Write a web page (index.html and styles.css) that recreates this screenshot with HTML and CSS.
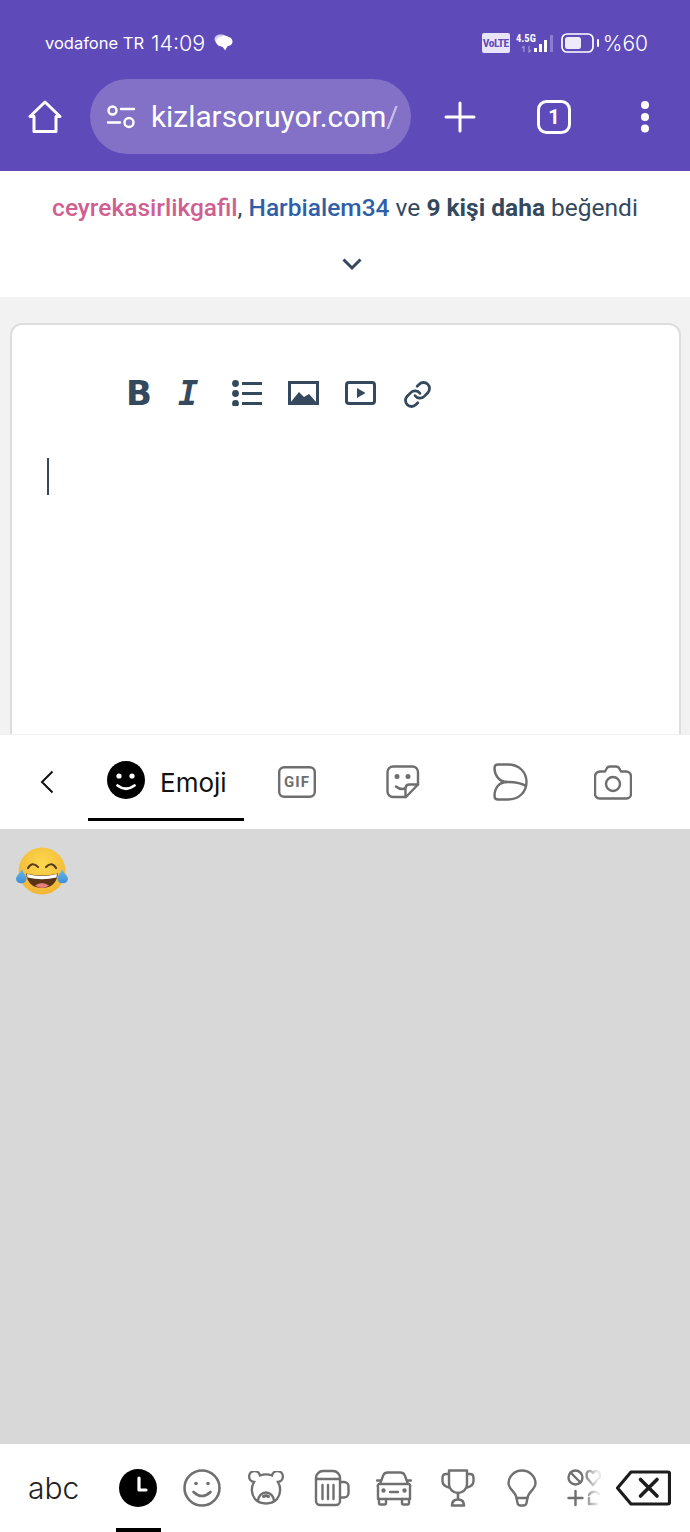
FILE: index.html
```html
<!DOCTYPE html>
<html lang="en">
<head>
  <meta charset="UTF-8" />
  <meta name="viewport" content="width=device-width, initial-scale=1.0"/>
  <title>kizlarsoruyor.com</title>
  <link rel="stylesheet" href="styles.css">
</head>
<body>
  <div class="phone">
    <header class="chrome">
      <div class="status">
        <span class="carrier">vodafone TR</span>
        <span class="clock">14:09</span>
        <svg class="bubble" width="19" height="18" viewBox="0 0 19 18">
          <path d="M7 0.500C11 0.500 14 2.500 14 5C14 8 11 10 7 10C3 10 0.500 8 0.500 5C0.500 2.500 3 0.500 7 0.500Z" fill="#d5cdf0"/>
          <path d="M10.500 2C15 2 18.500 4.300 18.500 7.500C18.500 10.300 16 12 13.500 12.300L11 16.500C10 14.500 9 13 7.500 12.500C4 12 2 10.200 2 7.500C2 4.300 6 2 10.500 2Z" fill="#fff"/>
        </svg>
        <div class="status-right">
          <span class="volte">VoLTE</span>
          <svg class="signal" width="38" height="26" viewBox="0 0 38 26">
            <text x="0" y="12" class="signal-type">4.5G</text>
            <path d="M8 16V22M6 18L8 16M13 16V22L15 20" stroke="#9d8fd8" stroke-width="1.3" fill="none"/>
            <rect x="18" y="18" width="3" height="4" fill="#fff"/>
            <rect x="23" y="14" width="3" height="8" fill="#fff"/>
            <rect x="28" y="10" width="3" height="12" fill="#fff"/>
            <rect x="34" y="5" width="3" height="17" fill="#8d7dd0"/>
          </svg>
          <svg class="battery" width="40" height="20" viewBox="0 0 40 20">
            <rect x="1" y="1" width="31" height="18" rx="5" fill="none" stroke="#fff" stroke-width="1.7"/>
            <rect x="4" y="4" width="16" height="12" rx="2.5" fill="#efeafa"/>
            <rect x="36" y="6" width="2" height="8" rx="1" fill="#fff"/>
          </svg>
          <span class="percent">%60</span>
        </div>
      </div>
      <div class="toolbar">
        <svg class="home" width="34" height="34" viewBox="0 0 34 34"><path d="M17 2L2 16.5H6V31.5H28V16.5H32Z" fill="none" stroke="#fff" stroke-width="3" stroke-linejoin="round"/></svg>
        <div class="url-pill">
          <svg class="tune" width="30" height="24" viewBox="0 0 30 24" fill="none" stroke="#fff" stroke-width="2.4" stroke-linecap="round">
            <circle cx="6.5" cy="5.5" r="4"/>
            <path d="M15 4H28M2 17.5H14"/>
            <circle cx="23" cy="17.5" r="4.5"/>
          </svg>
          <span class="url">kizlarsoruyor.com<span class="url-fade">/</span></span>
        </div>
        <svg class="plus" width="32" height="32" viewBox="0 0 32 32"><path d="M16 2V30M2 16H30" stroke="#fff" stroke-width="3" stroke-linecap="round"/></svg>
        <svg class="tabs" width="36" height="36" viewBox="0 0 36 36">
          <rect x="2.5" y="2.5" width="31" height="31" rx="8" fill="none" stroke="#fff" stroke-width="3"/>
          <text x="18" y="25" class="tabs-count">1</text>
        </svg>
        <svg class="dots" width="10" height="34" viewBox="0 0 10 34" fill="#fff"><circle cx="5" cy="5" r="4"/><circle cx="5" cy="17" r="4"/><circle cx="5" cy="28.5" r="4"/></svg>
      </div>
    </header>

    <section class="likes">
      <p class="likes-text"><span class="user-pink">ceyrekasirlikgafil</span>, <span class="user-blue">Harbialem34</span> ve <b>9 kişi daha</b> beğendi</p>
      <svg class="chevron" width="22" height="14" viewBox="0 0 22 14"><path d="M2.5 2.5L11 11L19.5 2.5" fill="none" stroke="#34495e" stroke-width="3"/></svg>
    </section>

    <section class="reply">
      <div class="editor">
        <div class="format-bar">
          <span class="fmt fmt-bold">B</span>
          <span class="fmt fmt-italic">I</span>
          <svg class="fmt-list" width="32" height="26" viewBox="0 0 32 26" fill="#34495e">
            <circle cx="4.5" cy="3.5" r="3.4"/><circle cx="4.5" cy="13.5" r="3.4"/><circle cx="4.5" cy="23.5" r="3.4"/>
            <path d="M11 3.5H31M11 13.5H31M11 23.5H31" stroke="#34495e" stroke-width="3"/>
          </svg>
          <svg class="fmt-image" width="31" height="24" viewBox="0 0 31 24">
            <rect x="1.5" y="1.5" width="28" height="21" fill="none" stroke="#34495e" stroke-width="3"/>
            <path d="M2 22L11 11L16 16L21 13L29 22Z" fill="#34495e"/>
          </svg>
          <svg class="fmt-video" width="31" height="24" viewBox="0 0 31 24">
            <rect x="1.5" y="1.5" width="28" height="21" rx="2.5" fill="none" stroke="#34495e" stroke-width="3"/>
            <path d="M12 7L20.5 12L12 17Z" fill="#34495e"/>
          </svg>
          <svg class="fmt-link" width="29" height="29" viewBox="0 0 24 24" fill="none" stroke="#34495e" stroke-width="2.3" stroke-linecap="round">
            <path d="M10 13a5 5 0 0 0 7.54.54l3-3a5 5 0 0 0-7.07-7.07l-1.72 1.71"/>
            <path d="M14 11a5 5 0 0 0-7.54-.54l-3 3a5 5 0 0 0 7.07 7.07l1.71-1.71"/>
          </svg>
        </div>
        <div class="caret"></div>
      </div>
    </section>

    <nav class="kb-tabs">
      <div class="kb-back">
        <svg width="14" height="24" viewBox="0 0 14 24"><path d="M12.5 1.5L2 12L12.5 22.5" fill="none" stroke="#111" stroke-width="2"/></svg>
      </div>
      <div class="kb-tab-active">
        <svg width="38" height="38" viewBox="0 0 38 38">
          <circle cx="19" cy="19" r="19" fill="#000"/>
          <circle cx="12" cy="15" r="2.6" fill="#fff"/><circle cx="25" cy="15" r="2.6" fill="#fff"/>
          <path d="M10.5 24.5Q19 31 27.500 24.500" fill="none" stroke="#fff" stroke-width="2.8" stroke-linecap="round"/>
        </svg>
        <span class="kb-tab-label">Emoji</span>
      </div>
      <div class="kb-slot kb-slot-gif">
        <svg width="38" height="32" viewBox="0 0 38 32">
          <rect x="1.2" y="1.2" width="35.600" height="29.600" rx="5" fill="none" stroke="#6e6e6e" stroke-width="2.4"/>
          <text x="19" y="21" class="gif-label">GIF</text>
        </svg>
      </div>
      <div class="kb-slot kb-slot-sticker">
        <svg width="34" height="34" viewBox="0 0 34 34" fill="none" stroke="#6e6e6e" stroke-width="2.400" stroke-linejoin="round" stroke-linecap="round">
          <path d="M7 1.500H26.500A5.500 5.500 0 0 1 32 7V19.500L20 32H7A5.500 5.500 0 0 1 1.500 26.500V7A5.500 5.500 0 0 1 7 1.500Z"/>
          <path d="M32 19.500H23A4 4 0 0 0 19.500 23.500V32"/>
          <path d="M10 21.500Q14 25 19 23.500"/>
          <circle cx="11" cy="11.500" r="1.300" fill="#6e6e6e"/><circle cx="22" cy="11.500" r="1.300" fill="#6e6e6e"/>
        </svg>
      </div>
      <div class="kb-slot kb-slot-bird">
        <svg width="35" height="38" viewBox="0 0 35 38" fill="none" stroke="#6e6e6e" stroke-width="2.400" stroke-linejoin="round">
          <path d="M5 1.500H15C26 1.500 33.500 9 33.500 19C33.500 29 26 36.500 15 36.500H5Q1.500 36.500 1.500 33C1.500 25 6 19 14 19C22 19 28 19.500 33 23"/>
          <path d="M14 19C6 19 1.500 12 1.500 5Q1.500 1.500 5 1.500"/>
        </svg>
      </div>
      <div class="kb-slot kb-slot-camera">
        <svg width="38" height="35" viewBox="0 0 38 35" fill="none" stroke="#6e6e6e" stroke-width="2.400" stroke-linejoin="round">
          <path d="M6 6.500H11L13 3Q14 1.500 16 1.500H22Q24 1.500 25 3L27 6.500H32A5 5 0 0 1 37 11.500V29A4.500 4.500 0 0 1 32.500 33.500H5.500A4.500 4.500 0 0 1 1 29V11.500A5 5 0 0 1 6 6.500Z"/>
          <circle cx="19" cy="19" r="7"/>
        </svg>
      </div>
    </nav>

    <section class="recent">
      <svg class="laugh" width="54" height="48" viewBox="0 0 54 48">
        <defs>
          <radialGradient id="face" cx="50%" cy="35%" r="70%"><stop offset="0" stop-color="#fcd94f"/><stop offset="1" stop-color="#f2b233"/></radialGradient>
          <linearGradient id="tear" x1="0" y1="0" x2="0" y2="1"><stop offset="0" stop-color="#67b8ea"/><stop offset="1" stop-color="#3d8fd6"/></linearGradient>
        </defs>
        <circle cx="27" cy="24" r="23.500" fill="url(#face)"/>
        <path d="M13 21Q17 14 23 20M31 20Q37 14 41 21" fill="none" stroke="#5a3d1c" stroke-width="2.200" stroke-linecap="round"/>
        <path d="M11 26.500Q27 30.500 43 26.500Q41 41 27 41Q13 41 11 26.500Z" fill="#5b3416"/>
        <path d="M12 27Q27 31 42 27L41.500 30.500Q27 34 12.500 30.500Z" fill="#fff"/>
        <path d="M20 38.500Q27 33.500 34 38.500Q30.500 41 27 41Q23.500 41 20 38.500Z" fill="#e2807a"/>
        <path d="M7 22C8.500 27 11.500 28.500 11.500 31.500A5.300 5.300 0 0 1 1 32C1 28.500 5 27 7 22Z" fill="url(#tear)"/>
        <path d="M47 22C45.500 27 42.500 28.500 42.500 31.500A5.300 5.300 0 0 0 53 32C53 28.500 49 27 47 22Z" fill="url(#tear)"/>
      </svg>
    </section>

    <nav class="kb-cats">
      <span class="abc">abc</span>
      <div class="cat cat-active">
        <svg width="38" height="38" viewBox="0 0 38 38"><circle cx="19" cy="19" r="19" fill="#000"/><path d="M20 9V21H27" fill="none" stroke="#fff" stroke-width="3.200" stroke-linecap="round" stroke-linejoin="round"/></svg>
      </div>
      <div class="cat">
        <svg width="38" height="38" viewBox="0 0 38 38" fill="none" stroke="#707070" stroke-width="2.600" stroke-linecap="round">
          <circle cx="19" cy="19" r="17.500"/>
          <circle cx="13" cy="14.500" r="1.800" fill="#707070" stroke="none"/><circle cx="25" cy="14.500" r="1.800" fill="#707070" stroke="none"/>
          <path d="M10.500 23Q19 31 27.500 23"/>
        </svg>
      </div>
      <div class="cat">
        <svg width="38" height="34" viewBox="0 0 38 34" fill="none" stroke="#707070" stroke-width="2.400" stroke-linecap="round">
          <path d="M7 11A5.500 5.500 0 1 1 13 4.500C17 3 21 3 25 4.500A5.500 5.500 0 1 1 31 11C34 16 34 23 30 28C27 31.500 23 32.500 19 32.500C15 32.500 11 31.500 8 28C4 23 4 16 7 11Z"/>
          <path d="M11 30C11 25 15 21.500 19 21.500C23 21.500 27 25 27 30"/>
          <path d="M16.500 25.500L19 24.500L21.500 25.500" stroke-width="3"/>
        </svg>
      </div>
      <div class="cat cat-beer">
        <svg width="36" height="38" viewBox="0 0 36 38" fill="none" stroke="#707070" stroke-width="2.400" stroke-linecap="round" stroke-linejoin="round">
          <path d="M2 9A7 7 0 0 1 9 2H19A7 7 0 0 1 26 9V32A4 4 0 0 1 22 36H6A4 4 0 0 1 2 32Z"/>
          <path d="M2 10H26M26 13H30A4.500 4.500 0 0 1 34.500 17.500V24A4.500 4.500 0 0 1 30 28.500H26"/>
          <path d="M8.500 16V30M14 16V30M19.500 16V30"/>
        </svg>
      </div>
      <div class="cat">
        <svg width="36" height="35" viewBox="0 0 36 35" fill="none" stroke="#707070" stroke-width="2.400" stroke-linecap="round" stroke-linejoin="round">
          <path d="M4 13L7 5Q8 1.500 12 1.500H24Q28 1.500 29 5L32 13M4 13H32A2 2 0 0 1 34 16V28H2V16A2 2 0 0 1 4 13Z"/>
          <path d="M1 9.500H4.500M31.500 9.500H35M3 28V32A1.500 1.500 0 0 0 4.500 33.500H8.500A1.500 1.500 0 0 0 10 32V28M26 28V32A1.500 1.500 0 0 0 27.500 33.500H31.500A1.500 1.500 0 0 0 33 32V28M14 21H22"/>
          <circle cx="7.500" cy="19.500" r="1" fill="#707070"/><circle cx="28.500" cy="19.500" r="1" fill="#707070"/>
        </svg>
      </div>
      <div class="cat">
        <svg width="34" height="38" viewBox="0 0 34 38" fill="none" stroke="#707070" stroke-width="2.400" stroke-linecap="round" stroke-linejoin="round">
          <path d="M8 1.500H26V15A9 9 0 0 1 8 15Z"/>
          <path d="M8 5H5Q1.500 5 1.500 9V12Q1.500 17 8 18.500M26 5H29Q32.500 5 32.500 9V12Q32.500 17 26 18.500"/>
          <path d="M17 24V30M11 36.500Q11 30.500 17 30.500Q23 30.500 23 36.500Z" stroke-width="2.600"/>
        </svg>
      </div>
      <div class="cat">
        <svg width="30" height="38" viewBox="0 0 30 38" fill="none" stroke="#707070" stroke-width="2.400" stroke-linecap="round" stroke-linejoin="round">
          <path d="M9.500 29C9 23 1.500 20 1.500 14.500A13.500 13 0 0 1 28.500 14.500C28.500 20 21 23 20.500 29Z"/>
          <path d="M9.500 29L10.500 34Q11 36.500 13.500 36.500H16.500Q19 36.500 19.500 34L20.500 29"/>
        </svg>
      </div>
      <div class="cat cat-symbols">
        <svg width="34" height="38" viewBox="0 0 34 38" fill="none" stroke="#707070" stroke-width="2.400" stroke-linecap="round" stroke-linejoin="round">
          <circle cx="8.500" cy="8.500" r="7"/>
          <path d="M3.500 3.500L13.500 13.500M8.500 22V36M1.500 29H15.500"/>
          <path d="M26 16L20 9Q18.500 2 23 2Q25 2 26 4Q27 2 29 2Q33 2 33 8Z"/>
          <path d="M22 26A6 6 0 0 1 32 25M30 35H22V29"/>
        </svg>
      </div>
      <div class="cat cat-delete">
        <svg width="55" height="36" viewBox="0 0 55 36" fill="none" stroke="#1d1d1d" stroke-width="3.200" stroke-linejoin="round" stroke-linecap="round">
          <path d="M15 2H52A1.500 1.500 0 0 1 53.500 3.500V32.500A1.500 1.500 0 0 1 52 34H15L1.500 18Z"/>
          <path d="M24.500 9.500L41 26M41 9.500L24.500 26" stroke-width="3.600"/>
        </svg>
      </div>
    </nav>
  </div>
</body>
</html>
```

FILE: styles.css
```css
* {
  box-sizing: border-box;
}
body {
  margin: 0;
  font-family: "Roboto", sans-serif;
  background: #fff;
}
svg {
  display: block;
  flex: none;
}
.phone {
  width: 690px;
  height: 1532px;
  overflow: hidden;
  display: flex;
  flex-direction: column;
}

/* browser chrome */
.chrome {
  height: 171px;
  flex: none;
  background: #5f4aba;
  color: #fff;
}
.status {
  height: 79px;
  padding: 30px 42px 0 45px;
  display: flex;
  align-items: flex-start;
}
.carrier {
  font-family: "Inter", sans-serif;
  font-size: 16.5px;
  line-height: 26px;
  width: 106px;
  white-space: nowrap;
}
.clock {
  font-family: "Inter", sans-serif;
  font-size: 21.5px;
  font-weight: 300;
  line-height: 26px;
  width: 63px;
}
.bubble {
  margin-top: 4px;
}
.status-right {
  margin-left: auto;
  display: flex;
  align-items: center;
  height: 26px;
}
.volte {
  width: 28px;
  height: 20px;
  background: #e9e4f8;
  color: #5f4aba;
  border-radius: 2px;
  font-family: "Roboto", sans-serif;
  font-weight: 700;
  font-stretch: condensed;
  font-size: 11.5px;
  line-height: 20px;
  letter-spacing: -0.5px;
  text-align: center;
  margin-right: 6px;
}
.signal {
  margin-right: 7px;
}
.signal-type {
  font-family: "Roboto", sans-serif;
  font-size: 10.5px;
  font-weight: 700;
  font-stretch: condensed;
  fill: #fff;
}
.battery {
  margin-right: 2px;
}
.percent {
  font-family: "Inter", sans-serif;
  font-size: 21px;
  font-weight: 300;
}
.toolbar {
  height: 75px;
  display: flex;
  align-items: center;
}
.home {
  margin: 0 28px;
}
.url-pill {
  width: 321px;
  height: 75px;
  border-radius: 38px;
  background: #8370c7;
  padding: 0 14px 0 16px;
  display: flex;
  align-items: center;
  gap: 15px;
  overflow: hidden;
}
.url {
  font-family: "Roboto", sans-serif;
  font-size: 29.8px;
  white-space: nowrap;
}
.url-fade {
  opacity: 0.55;
}
.plus {
  margin-left: 33px;
}
.tabs {
  margin-left: 60px;
}
.tabs-count {
  font-family: "Roboto", sans-serif;
  font-size: 20px;
  font-weight: 700;
  fill: #fff;
  text-anchor: middle;
}
.dots {
  margin-left: 68px;
}

/* likes */
.likes {
  height: 126px;
  flex: none;
  background: #fff;
  display: flex;
  flex-direction: column;
  align-items: center;
  padding-top: 21px;
}
.likes-text {
  margin: 0;
  font-size: 24.5px;
  line-height: 32px;
  color: #34495e;
  white-space: nowrap;
}
.likes-text b {
  font-weight: 700;
}
.user-pink {
  color: #cf5f90;
  font-weight: 500;
}
.user-blue {
  color: #2f5fa8;
  font-weight: 500;
}
.chevron {
  margin: 33px 0 0 14px;
}

/* reply editor */
.reply {
  height: 437px;
  flex: none;
  background: #f2f2f2;
  padding: 26px 9px 0 10px;
  overflow: hidden;
}
.editor {
  height: 440px;
  background: #fff;
  border: 2px solid #ddd;
  border-radius: 12px;
  padding: 52px 0 0 35px;
}
.format-bar {
  height: 32px;
  padding-left: 79px;
  display: flex;
  align-items: center;
}
.fmt {
  color: #34495e;
  line-height: 32px;
}
.fmt-bold {
  width: 52px;
  font-family: "DejaVu Sans", sans-serif;
  font-weight: 700;
  font-size: 34px;
}
.fmt-italic {
  width: 53px;
  font-family: "DejaVu Sans Mono", monospace;
  font-style: italic;
  font-weight: 700;
  font-size: 34px;
}
.fmt-list {
  margin-right: 25px;
}
.fmt-image {
  margin-right: 26px;
}
.fmt-video {
  margin-right: 27px;
}
.fmt-link {
  margin-top: 3px;
}
.caret {
  width: 2px;
  height: 37px;
  margin-top: 49px;
  background: #34495e;
}

/* keyboard tab row */
.kb-tabs {
  height: 95px;
  flex: none;
  background: #fff;
  border-top: 1px solid #f0f0f0;
  display: flex;
  align-items: flex-start;
}
.kb-back {
  width: 88px;
  height: 94px;
  padding: 0 0 0 40px;
  display: flex;
  align-items: center;
}
.kb-tab-active {
  width: 156px;
  height: 86px;
  border-bottom: 3px solid #000;
  padding: 7px 0 0 19px;
  display: flex;
  align-items: center;
  gap: 15px;
}
.kb-tab-label {
  font-family: "Inter", sans-serif;
  font-size: 26px;
  padding-top: 4px;
  color: #111;
}
.kb-slot {
  height: 94px;
  display: flex;
  align-items: center;
  justify-content: center;
}
.kb-slot-gif {
  width: 106px;
}
.kb-slot-sticker {
  width: 106px;
}
.kb-slot-bird {
  width: 108px;
}
.kb-slot-camera {
  width: 98px;
}
.gif-label {
  font-family: "Roboto", sans-serif;
  font-size: 15px;
  font-weight: 700;
  letter-spacing: 1px;
  fill: #6e6e6e;
  text-anchor: middle;
}

/* recent emoji */
.recent {
  flex: 1;
  background: #d8d8d8;
  padding: 18px 0 0 15px;
}

/* keyboard category row */
.kb-cats {
  height: 88px;
  flex: none;
  background: #fff;
  display: flex;
  align-items: center;
}
.abc {
  width: 106px;
  padding-left: 28px;
  font-family: "Inter", sans-serif;
  font-size: 30px;
  font-weight: 300;
  color: #222;
}
.cat {
  width: 64px;
  height: 88px;
  display: flex;
  align-items: center;
  justify-content: center;
  position: relative;
}
.cat-active::after {
  content: "";
  position: absolute;
  left: 10px;
  bottom: 0;
  width: 45px;
  height: 4px;
  background: #000;
}
.cat-beer svg {
  margin-left: 4px;
}
.cat-symbols {
  width: 60px;
}
.cat-symbols svg {
  -webkit-mask-image: linear-gradient(to right, #000 45%, rgba(0, 0, 0, 0.15) 90%);
  mask-image: linear-gradient(to right, #000 45%, rgba(0, 0, 0, 0.15) 90%);
}
.cat-delete {
  width: 58px;
}
```
